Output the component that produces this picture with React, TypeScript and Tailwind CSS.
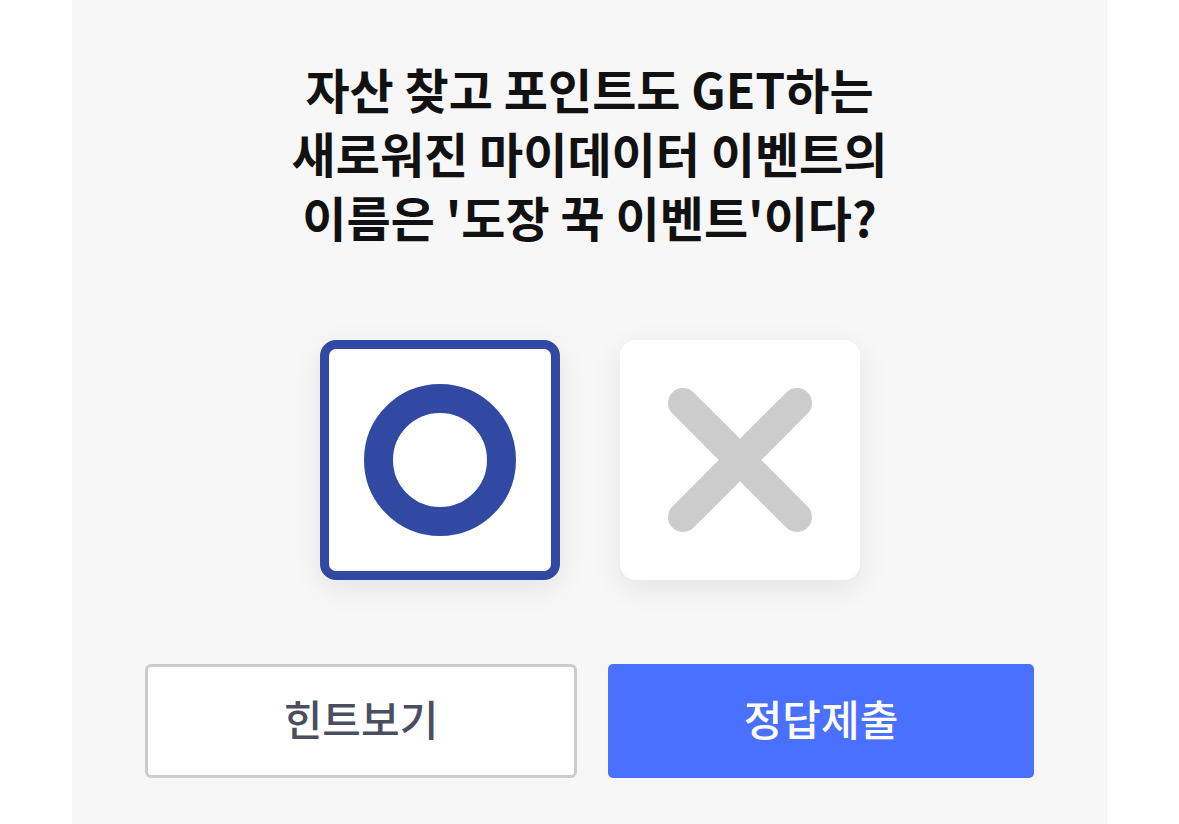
import React, { useState } from 'react';

const FONT = "font-['Noto_Sans_CJK_KR','Noto_Sans',sans-serif]";

export default function App() {
  const [answer, setAnswer] = useState<'O' | 'X'>('O');

  return (
    <div className={`min-h-screen bg-white flex justify-center ${FONT}`}>
      <div className="w-[1035px] min-h-[824px] bg-[#f7f7f7] px-[73px] pt-[56px] flex flex-col">
        <h1 className="text-center text-[48px] leading-[64px] font-bold text-[#111111]">
          자산 찾고 포인트도 GET하는
          <br />
          새로워진 마이데이터 이벤트의
          <br />
          이름은 '도장 꾹 이벤트'이다?
        </h1>

        <div className="flex justify-center gap-[60px] mt-[92px]">
          <button
            type="button"
            onClick={() => setAnswer('O')}
            className={`w-[240px] h-[240px] rounded-[16px] bg-white flex items-center justify-center shadow-[0_8px_30px_rgba(0,0,0,0.08)] border-[9px] ${
              answer === 'O' ? 'border-[#3149a3]' : 'border-white'
            }`}
          >
            <svg width="152" height="152" viewBox="0 0 152 152">
              <circle cx="76" cy="76" r="61.5" fill="none" stroke={answer === 'O' ? '#3149a3' : '#cccccc'} strokeWidth="29" />
            </svg>
          </button>
          <button
            type="button"
            onClick={() => setAnswer('X')}
            className={`w-[240px] h-[240px] rounded-[16px] bg-white flex items-center justify-center shadow-[0_8px_30px_rgba(0,0,0,0.08)] border-[9px] ${
              answer === 'X' ? 'border-[#3149a3]' : 'border-white'
            }`}
          >
            <svg width="146" height="146" viewBox="0 0 146 146">
              <g stroke={answer === 'X' ? '#3149a3' : '#cccccc'} strokeWidth="30" strokeLinecap="round">
                <line x1="16" y1="16" x2="130" y2="130" />
                <line x1="130" y1="16" x2="16" y2="130" />
              </g>
            </svg>
          </button>
        </div>

        <div className="flex gap-[31px] mt-[84px]">
          <button
            type="button"
            className="flex-1 h-[114px] pb-[8px] bg-white border-[3px] border-[#cccccc] rounded-[6px] text-[42px] font-medium text-[#4a4f5f]"
          >
            힌트보기
          </button>
          <button
            type="button"
            className="flex-1 h-[114px] pb-[8px] bg-[#4a70ff] rounded-[5px] text-[42px] font-medium text-white"
          >
            정답제출
          </button>
        </div>
      </div>
    </div>
  );
}
